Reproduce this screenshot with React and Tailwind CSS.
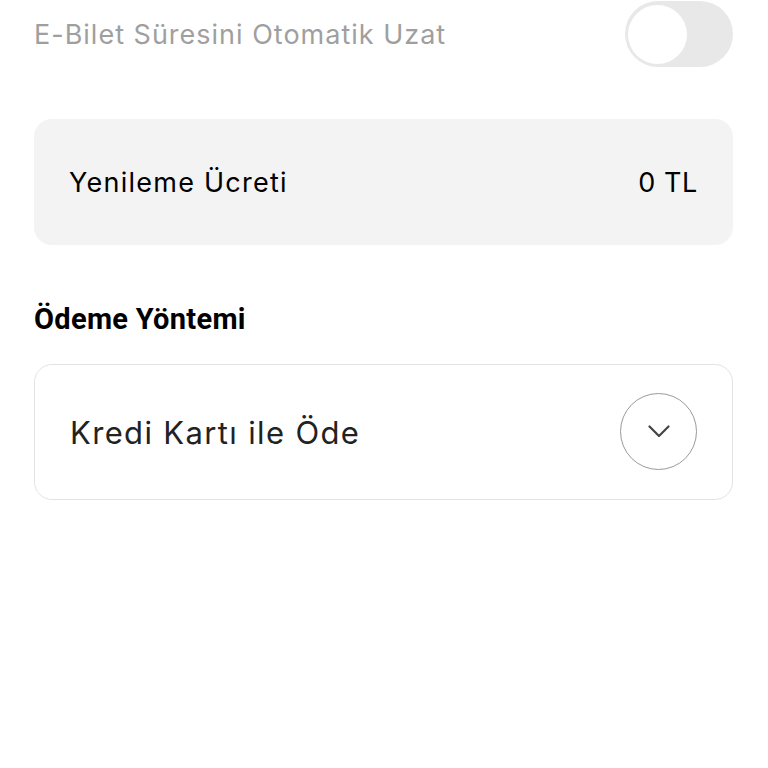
import { useState } from "react";

function Toggle({ on, onChange }) {
  return (
    <button
      onClick={() => onChange(!on)}
      className="flex h-[66px] w-[108px] shrink-0 items-center rounded-full bg-[#e8e8e8] px-[3px]"
    >
      <span
        className={
          "block h-[59px] w-[59px] rounded-full bg-white transition " +
          (on ? "translate-x-[43px]" : "translate-x-0")
        }
      />
    </button>
  );
}

export default function App() {
  const [autoExtend, setAutoExtend] = useState(false);

  return (
    <div className="min-h-[768px] w-full bg-white font-['Inter',sans-serif]">
      <div className="flex flex-col pl-[34px] pr-[35px] pt-[1px]">
        {/* auto extend row */}
        <div className="flex items-center justify-between">
          <span className="pt-[3px] text-[27px] tracking-[1px] text-[#9f9f9f]">
            E-Bilet Süresini Otomatik Uzat
          </span>
          <Toggle on={autoExtend} onChange={setAutoExtend} />
        </div>

        {/* fee */}
        <div className="mt-[52px] flex h-[126px] items-center justify-between rounded-[18px] bg-[#f3f3f3] px-[35px] pt-[2px]">
          <span className="text-[27px] tracking-[1.25px] text-black">Yenileme Ücreti</span>
          <span className="text-[27px] tracking-[0.6px] text-black">0 TL</span>
        </div>

        {/* payment method */}
        <h2 className="mt-[58px] font-['Roboto',sans-serif] text-[29px] font-bold leading-[32px] tracking-[0.3px] text-black">
          Ödeme Yöntemi
        </h2>

        <div className="mt-[29px] flex h-[136px] items-center justify-between rounded-[18px] border-[1.5px] border-[#e3e3e3] pl-[35px] pr-[35px]">
          <span className="pt-[2px] text-[31px] tracking-[1.35px] text-[#222]">Kredi Kartı ile Öde</span>
          <button className="-mt-[2px] flex h-[77px] w-[77px] items-center justify-center rounded-full border-[1.5px] border-[#9a9a9a]">
            <svg
              width="22"
              height="12"
              viewBox="0 0 22 12"
              fill="none"
              stroke="#444"
              strokeWidth="2.2"
              strokeLinecap="round"
              strokeLinejoin="round"
            >
              <path d="M1.5 1.5l9.5 9.5l9.5-9.5" />
            </svg>
          </button>
        </div>
      </div>
    </div>
  );
}
